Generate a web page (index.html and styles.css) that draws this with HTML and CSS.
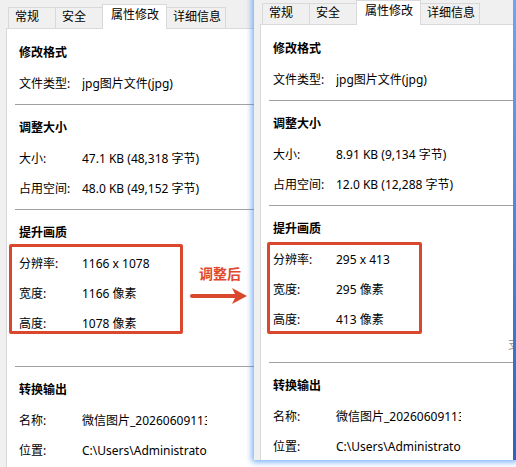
FILE: index.html
```html
<!DOCTYPE html>
<html lang="zh-CN">
<head>
  <meta charset="UTF-8">
  <title>属性修改 | 调整前后</title>
  <meta name="viewport" content="width=device-width, initial-scale=1.0">
  <link rel="stylesheet" href="styles.css">
</head>
<body>

  <div class="desktop">

    <!-- 调整前 -->
    <div class="window window-back">
      <div class="tabs">
        <div class="tab">常规</div>
        <div class="tab">安全</div>
        <div class="tab active">属性修改</div>
        <div class="tab">详细信息</div>
      </div>
      <div class="panel">
        <section class="group first">
          <div class="heading">修改格式</div>
          <div class="row"><span class="label">文件类型:</span><span class="value">jpg图片文件(jpg)</span></div>
        </section>
        <hr class="sep">
        <section class="group">
          <div class="heading">调整大小</div>
          <div class="row"><span class="label">大小:</span><span class="value">47.1 KB (48,318 字节)</span></div>
          <div class="row"><span class="label">占用空间:</span><span class="value">48.0 KB (49,152 字节)</span></div>
        </section>
        <hr class="sep">
        <section class="group quality">
          <div class="heading">提升画质</div>
          <div class="row"><span class="label">分辨率:</span><span class="value">1166 x 1078</span></div>
          <div class="row"><span class="label">宽度:</span><span class="value">1166 像素</span></div>
          <div class="row"><span class="label">高度:</span><span class="value">1078 像素</span></div>
          <div class="frame frame-back"></div>
        </section>
        <hr class="sep">
        <section class="group">
          <div class="heading">转换输出</div>
          <div class="row"><span class="label">名称:</span><span class="value">微信图片_20260609113521.jpg</span></div>
          <div class="row"><span class="label">位置:</span><span class="value">C:\Users\Administrator\Pictures</span></div>
        </section>
      </div>
    </div>

    <div class="note">调整后</div>
    <svg class="arrow" width="62" height="20" viewBox="0 0 62 20">
      <path d="M4 10 L50 10" stroke="#d9472c" stroke-width="4" stroke-linecap="round" fill="none"/>
      <polygon points="59,10 44,2 48,10 44,18" fill="#d9472c"/>
    </svg>

    <!-- 调整后 -->
    <div class="window window-front">
      <div class="tabs">
        <div class="tab">常规</div>
        <div class="tab">安全</div>
        <div class="tab active">属性修改</div>
        <div class="tab">详细信息</div>
      </div>
      <div class="panel">
        <section class="group first">
          <div class="heading">修改格式</div>
          <div class="row"><span class="label">文件类型:</span><span class="value">jpg图片文件(jpg)</span></div>
        </section>
        <hr class="sep">
        <section class="group">
          <div class="heading">调整大小</div>
          <div class="row"><span class="label">大小:</span><span class="value">8.91 KB (9,134 字节)</span></div>
          <div class="row"><span class="label">占用空间:</span><span class="value">12.0 KB (12,288 字节)</span></div>
        </section>
        <hr class="sep">
        <section class="group quality">
          <div class="heading">提升画质</div>
          <div class="row"><span class="label">分辨率:</span><span class="value">295 x 413</span></div>
          <div class="row"><span class="label">宽度:</span><span class="value">295 像素</span></div>
          <div class="row"><span class="label">高度:</span><span class="value">413 像素</span></div>
          <div class="frame frame-front"></div>
          <span class="edge-text">支</span>
        </section>
        <hr class="sep">
        <section class="group">
          <div class="heading">转换输出</div>
          <div class="row"><span class="label">名称:</span><span class="value">微信图片_20260609113521.jpg</span></div>
          <div class="row"><span class="label">位置:</span><span class="value">C:\Users\Administrator\Pictures</span></div>
        </section>
      </div>
    </div>

  </div>

</body>
</html>
```

FILE: styles.css
```css
body {
  margin: 0;
  background-color: #ffffff;
  font-family: "Noto Sans", "Noto Sans CJK SC", sans-serif;
  font-size: 12px;
  color: #000;
}

.desktop {
  position: relative;
  width: 516px;
  height: 467px;
  overflow: hidden;
}

.window {
  position: absolute;
  display: flex;
  flex-direction: column;
  box-sizing: border-box;
  padding-top: 7px;
  background-color: #f0f0f0;
}

.window-back {
  left: 0;
  top: 0;
  width: 300px;
  height: 480px;
}

.window-front {
  left: 254px;
  top: -4px;
  width: 262px;
  height: 464px;
  border-right: 3px solid #3f7be0;
  border-image: linear-gradient(#6ea6f5, #2e62bf) 1;
  box-shadow: 0 0 6px 2px rgba(70, 145, 245, 0.75);
}

/* tabs */

.tabs {
  display: flex;
  align-items: flex-end;
  height: 21px;
  margin-left: 8px;
}

.tab {
  box-sizing: border-box;
  min-width: 48px;
  height: 21px;
  padding: 0 4px 0 6px;
  margin-left: -1px;
  border: 1px solid #d9d9d9;
  border-bottom: none;
  line-height: 18px;
  white-space: nowrap;
}

.tab:first-child {
  margin-left: 0;
}

.tab.active {
  position: relative;
  z-index: 1;
  height: 25px;
  margin-bottom: -1px;
  padding: 0 7px 0 8px;
  background-color: #fff;
  line-height: 20px;
}

/* panel */

.panel {
  position: relative;
  flex: 1;
  margin-left: 6px;
  background-color: #fff;
  border-left: 1px solid #d9d9d9;
  border-top: 1px solid #d9d9d9;
  line-height: 16px;
  overflow: hidden;
}

.group {
  position: relative;
  display: flex;
  flex-direction: column;
  gap: 14px;
  padding: 15px 0 12px 12px;
}

.group.first {
  padding-top: 16px;
}

.group.quality {
  padding-bottom: 34px;
}

.heading {
  font-weight: bold;
  margin-bottom: 1px;
}

.row {
  display: flex;
  white-space: nowrap;
}

.label {
  width: 63px;
  flex-shrink: 0;
}

.value {
  width: 125px;
  overflow: hidden;
}

.sep {
  height: 0;
  margin: 0 0 0 8px;
  border: none;
  border-top: 1px solid #a0a0a0;
}

.edge-text {
  position: absolute;
  left: 247px;
  top: 131px;
  color: #9a9a9a;
}

/* annotations */

.frame {
  position: absolute;
  box-sizing: border-box;
  border: 3px solid #d9472c;
  border-radius: 2px;
}

.frame-back {
  left: 2px;
  top: 34px;
  width: 174px;
  height: 90px;
}

.frame-front {
  left: 6px;
  top: 36px;
  width: 155px;
  height: 92px;
}

.note {
  position: absolute;
  left: 199px;
  top: 263px;
  font-family: "Noto Sans CJK SC", sans-serif;
  font-size: 14px;
  font-weight: bold;
  line-height: 20px;
  color: #e0482c;
}

.arrow {
  position: absolute;
  left: 188px;
  top: 286px;
}
```
